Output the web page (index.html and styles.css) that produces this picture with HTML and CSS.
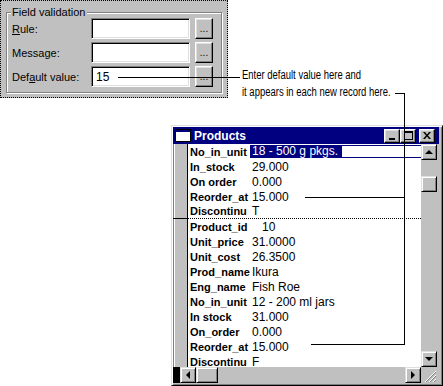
FILE: index.html
```html
<!DOCTYPE html>
<html lang="en">

<head>
    <meta charset="UTF-8">
    <title>Default value</title>
    <link rel="stylesheet" href="styles.css">
</head>

<body>
    <div class="canvas">
        <section class="dialog">
            <div class="group">
                <span class="legend">Field validation</span>
                <div class="fields">
                    <label class="lbl"><u>R</u>ule:</label>
                    <span class="box"></span>
                    <span class="dots">...</span>

                    <label class="lbl">Message:</label>
                    <span class="box"></span>
                    <span class="dots">...</span>

                    <label class="lbl">Def<u>a</u>ult value:</label>
                    <span class="box">15</span>
                    <span class="dots">...</span>
                </div>
            </div>
        </section>

        <p class="note">Enter default value here and<br>it appears in each new record here.</p>

        <section class="window">
            <div class="titlebar">
                <svg class="sysicon" width="16" height="13" viewBox="0 0 16 13">
                    <rect x="0.5" y="0.5" width="15" height="12" fill="#fff" stroke="#000"/>
                    <rect x="1" y="1" width="14" height="2" fill="#000080"/>
                </svg>
                <span class="title">Products</span>
                <span class="tbtn">
                    <svg width="8" height="8" viewBox="0 0 8 8"><rect x="1" y="6" width="6" height="2" fill="#000"/></svg>
                </span>
                <span class="tbtn">
                    <svg width="9" height="9" viewBox="0 0 9 9"><rect x="0.5" y="0.5" width="8" height="8" fill="none" stroke="#000"/><rect x="0" y="0" width="9" height="2" fill="#000"/></svg>
                </span>
                <span class="tbtn close">
                    <svg width="8" height="7" viewBox="0 0 8 7"><path d="M0 0h2l2 2.5 2-2.5h2l-3 3.5 3 3.5h-2l-2-2.5-2 2.5h-2l3-3.5z" fill="#000"/></svg>
                </span>
            </div>

            <div class="client">
                <div class="selector">
                    <div class="sel-record"></div>
                    <div class="sel-record"></div>
                </div>
                <div class="form">
                    <div class="row"><span class="name">No_in_unit</span><span class="field"><span class="selected">18 - 500 g pkgs.</span></span></div>
                    <div class="row"><span class="name">In_stock</span><span class="val">29.000</span></div>
                    <div class="row"><span class="name">On order</span><span class="val">0.000</span></div>
                    <div class="row"><span class="name">Reorder_at</span><span class="val">15.000</span></div>
                    <div class="row last"><span class="name">Discontinu</span><span class="val">T</span></div>
                    <div class="row"><span class="name">Product_id</span><span class="val num">10</span></div>
                    <div class="row"><span class="name">Unit_price</span><span class="val">31.0000</span></div>
                    <div class="row"><span class="name">Unit_cost</span><span class="val">26.3500</span></div>
                    <div class="row"><span class="name">Prod_name</span><span class="val">Ikura</span></div>
                    <div class="row"><span class="name">Eng_name</span><span class="val">Fish Roe</span></div>
                    <div class="row"><span class="name">No_in_unit</span><span class="val">12 - 200 ml jars</span></div>
                    <div class="row"><span class="name">In stock</span><span class="val">31.000</span></div>
                    <div class="row"><span class="name">On_order</span><span class="val">0.000</span></div>
                    <div class="row"><span class="name">Reorder_at</span><span class="val">15.000</span></div>
                    <div class="row"><span class="name">Discontinu</span><span class="val">F</span></div>
                </div>
                <div class="vscroll">
                    <span class="sbtn"><i class="arrow up"></i></span>
                    <span class="vtrack"><span class="thumb"></span></span>
                    <span class="sbtn"><i class="arrow down"></i></span>
                </div>
            </div>

            <div class="bottombar">
                <span class="navblock"></span>
                <div class="hscroll">
                    <span class="sbtn"><i class="arrow left"></i></span>
                    <span class="hthumb"></span>
                    <span class="htrack"></span>
                    <span class="sbtn"><i class="arrow right"></i></span>
                </div>
                <span class="grip">
                    <svg width="14" height="14" viewBox="0 0 14 14">
                        <path d="M13 2L2 13M13 6L6 13M13 10L10 13" stroke="#fff" stroke-width="1"/>
                        <path d="M13 3L3 13M13 7L7 13M13 11L11 13" stroke="#808080" stroke-width="1"/>
                    </svg>
                </span>
            </div>
        </section>

        <!-- callout leader lines -->
        <span class="leader lead-default"></span>
        <span class="leader lead-tick"></span>
        <span class="leader lead-down"></span>
        <span class="leader lead-rec1"></span>
        <span class="leader lead-rec2"></span>
    </div>
</body>

</html>
```

FILE: styles.css
```css
body {
    margin: 0;
    background-color: #fff;
    font-family: "Liberation Sans", Arial, sans-serif;
    font-size: 11px;
    color: #000;
}

.canvas {
    position: relative;
    width: 443px;
    height: 386px;
    overflow: hidden;
}

/* field properties dialog */

.dialog {
    position: absolute;
    left: 0;
    top: 0;
    width: 226px;
    height: 96px;
    border: 1px dotted #000;
    background-color: #c0c0c0;
}

.group {
    position: relative;
    margin: 11px 0 0 5px;
    width: 214px;
    height: 79px;
    border: 1px solid #808080;
    box-shadow: inset 1px 1px #fff, 1px 1px #fff;
}

.legend {
    position: absolute;
    left: 4px;
    top: -8px;
    padding: 0 2px 0 1px;
    background-color: #c0c0c0;
    line-height: 14px;
}

.fields {
    display: grid;
    grid-template-columns: 79px 99px 18px;
    grid-auto-rows: 21px;
    row-gap: 3px;
    padding: 5px 0 0 5px;
    align-items: center;
}

.fields .dots {
    margin-left: 5px;
}

.lbl {
    line-height: 14px;
}

.box {
    box-sizing: border-box;
    height: 21px;
    padding: 3px 0 0 4px;
    background-color: #fff;
    border: 1px solid;
    border-color: #808080 #fff #fff #808080;
    box-shadow: inset 1px 1px #000, inset -1px -1px #dfdfdf;
    font-size: 12px;
}

.dots {
    box-sizing: border-box;
    height: 21px;
    width: 18px;
    text-align: center;
    line-height: 20px;
    font-size: 10px;
    background-color: #c0c0c0;
    border: 1px solid;
    border-color: #fff #000 #000 #fff;
    box-shadow: inset -1px -1px #808080, inset 1px 1px #dfdfdf;
}

/* callout text */

.note {
    position: absolute;
    left: 242px;
    top: 67px;
    margin: 0;
    font-size: 12px;
    line-height: 17px;
    white-space: nowrap;
    transform: scaleX(0.79);
    transform-origin: left top;
}

/* products form window */

.window {
    position: absolute;
    left: 171px;
    top: 125px;
    width: 272px;
    height: 261px;
    box-sizing: border-box;
    display: flex;
    flex-direction: column;
    background-color: #c0c0c0;
    border: 1px solid;
    border-color: #dfdfdf #000 #000 #dfdfdf;
    box-shadow: inset 1px 1px #fff, inset -1px -1px #808080;
    padding: 1px;
}

.titlebar {
    display: flex;
    align-items: center;
    height: 17px;
    margin-right: 2px;
    padding: 0 4px 0 2px;
    background-color: #000080;
    color: #fff;
}

.sysicon {
    display: block;
    margin-right: 3px;
}

.title {
    flex: 1;
    font-weight: bold;
    font-size: 12px;
}

.tbtn {
    box-sizing: border-box;
    display: flex;
    align-items: center;
    justify-content: center;
    width: 16px;
    height: 14px;
    background-color: #c0c0c0;
    border: 1px solid;
    border-color: #fff #000 #000 #fff;
    box-shadow: inset -1px -1px #808080, inset 1px 1px #dfdfdf;
}

.tbtn.close {
    margin-left: 3px;
}

.client {
    display: flex;
    height: 223px;
    margin-right: 4px;
}

.selector {
    width: 15px;
    border-right: 1px solid #000;
    border-left: 1px solid #808080;
    box-shadow: inset 1px 0 #fff;
    box-sizing: border-box;
}

.sel-record {
    height: 74px;
    border-bottom: 1px solid #000;
    margin-left: -1px;
}

.sel-record + .sel-record {
    border-bottom: none;
}

.form {
    flex: 1;
    background-color: #fff;
    overflow: hidden;
}

.row {
    display: flex;
    align-items: center;
    height: 15px;
    padding-left: 2px;
    white-space: nowrap;
    font-size: 12px;
}

.row.last {
    height: 14px;
    border-bottom: 1px dotted #000;
}

.name {
    width: 60px;
    overflow: hidden;
    font-weight: bold;
    font-size: 11px;
}

.val {
    padding-left: 2px;
}

.val.num {
    padding-left: 12px;
}

.field {
    flex: 1;
    height: 13px;
    box-sizing: border-box;
    border: 1px solid #000080;
    border-right: none;
    display: flex;
    align-items: center;
}

.selected {
    background-color: #000080;
    color: #fff;
    line-height: 11px;
    padding: 0 4px 0 1px;
}

.vscroll {
    width: 16px;
    display: flex;
    flex-direction: column;
}

.sbtn {
    box-sizing: border-box;
    display: flex;
    align-items: center;
    justify-content: center;
    width: 16px;
    height: 16px;
    background-color: #c0c0c0;
    border: 1px solid;
    border-color: #dfdfdf #000 #000 #dfdfdf;
    box-shadow: inset 1px 1px #fff, inset -1px -1px #808080;
}

.vtrack {
    flex: 1;
    background-color: #c0c0c0;
    padding-top: 16px;
}

.thumb {
    display: block;
    box-sizing: border-box;
    width: 16px;
    height: 16px;
    border: 1px solid;
    border-color: #dfdfdf #000 #000 #dfdfdf;
    box-shadow: inset 1px 1px #fff, inset -1px -1px #808080;
}

.arrow {
    width: 0;
    height: 0;
    border: 4px solid transparent;
}

.arrow.up {
    border-bottom-color: #000;
    border-top-width: 0;
}

.arrow.down {
    border-top-color: #000;
    border-bottom-width: 0;
}

.arrow.left {
    border-right-color: #000;
    border-left-width: 0;
}

.arrow.right {
    border-left-color: #000;
    border-right-width: 0;
}

.bottombar {
    display: flex;
    height: 16px;
    margin-right: 4px;
}

.navblock {
    width: 7px;
    background-color: #000;
}

.hscroll {
    flex: 1;
    display: flex;
    background-color: #c0c0c0;
}

.hthumb {
    box-sizing: border-box;
    width: 22px;
    border: 1px solid;
    border-color: #dfdfdf #000 #000 #dfdfdf;
    box-shadow: inset 1px 1px #fff, inset -1px -1px #808080;
}

.htrack {
    flex: 1;
}

.grip {
    width: 16px;
    display: flex;
    align-items: flex-end;
    justify-content: flex-end;
}

/* leader lines over the pictures */

.leader {
    position: absolute;
    background-color: #000;
    z-index: 2;
}

.lead-default {
    left: 118px;
    top: 77px;
    width: 122px;
    height: 1px;
}

.lead-tick {
    left: 395px;
    top: 93px;
    width: 10px;
    height: 1px;
}

.lead-down {
    left: 404px;
    top: 93px;
    width: 1px;
    height: 252px;
}

.lead-rec1 {
    left: 305px;
    top: 197px;
    width: 99px;
    height: 1px;
}

.lead-rec2 {
    left: 311px;
    top: 344px;
    width: 93px;
    height: 1px;
}
```
